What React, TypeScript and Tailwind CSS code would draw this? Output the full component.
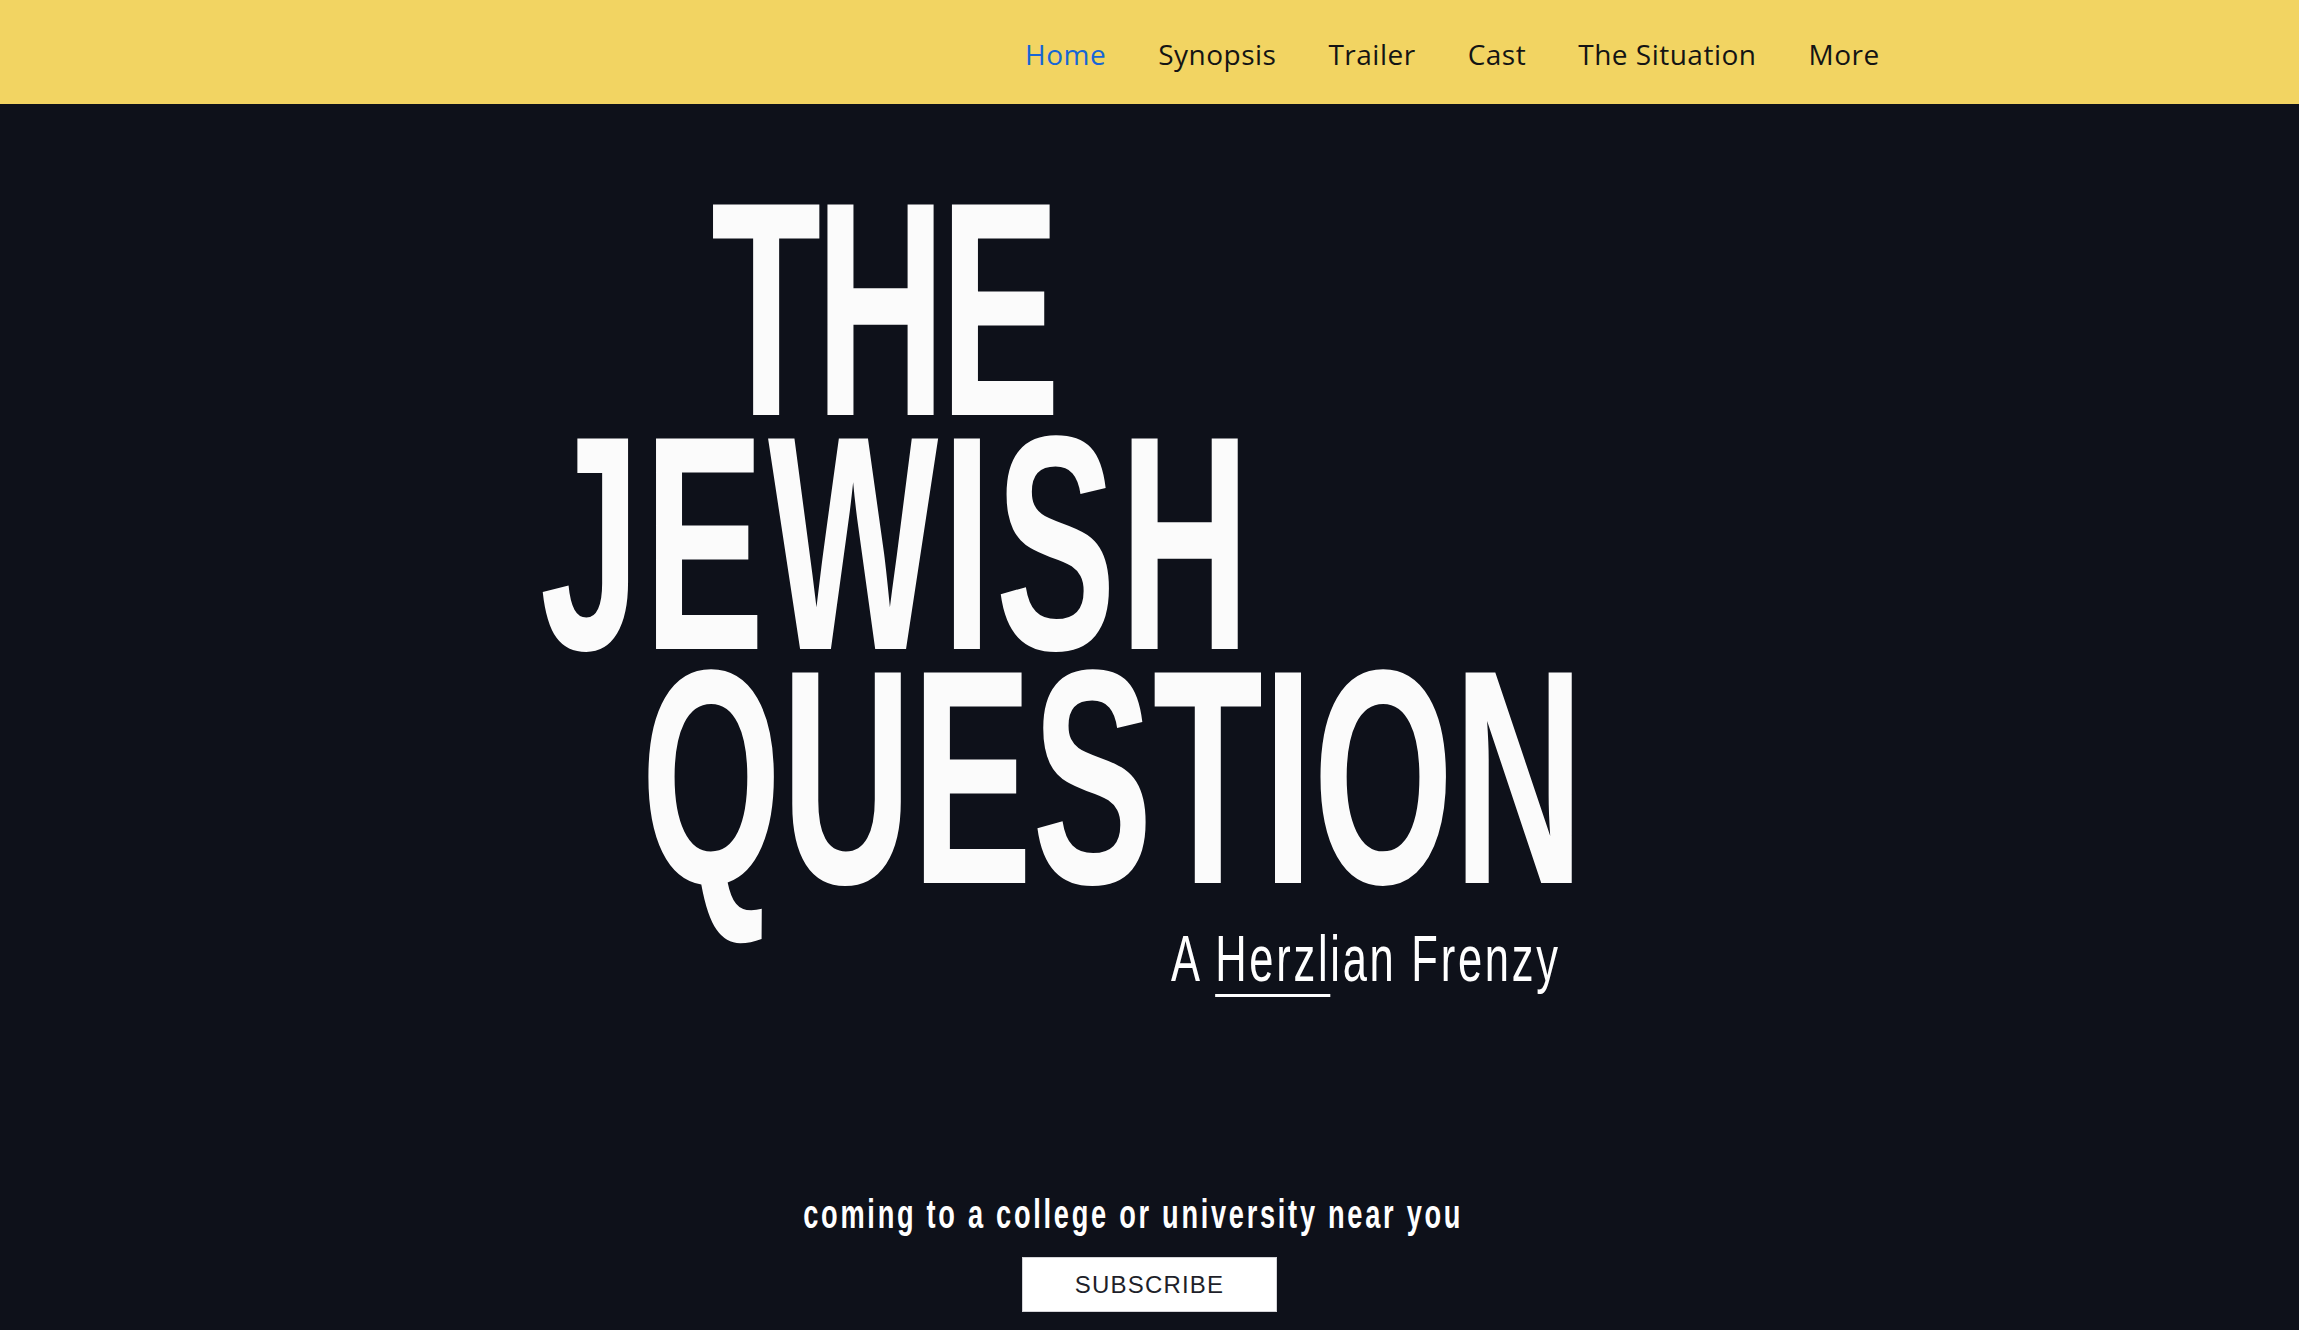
import React from "react";

const navItems = ["Home", "Synopsis", "Trailer", "Cast", "The Situation", "More"];

const Header = () => (
	<header className="h-[104px] bg-[#f2d462] flex items-center">
		<nav className="ml-[1025px] flex items-center gap-[52px] pt-[4px] font-['Open_Sans',sans-serif] text-[28px] tracking-[0.5px] leading-none">
			{navItems.map((item, i) => (
				<a
					key={item}
					href="#"
					className={i === 0 ? "text-[#1766d6]" : "text-[#141414]"}
				>
					{item}
				</a>
			))}
		</nav>
	</header>
);

const Title = () => (
	<h1 className="font-['Liberation_Sans',Arial,sans-serif] font-bold text-[306px] leading-[234px] text-[#fbfbfb] whitespace-nowrap">
		<div className="ml-[711px] origin-left scale-x-[0.59] tracking-[-10px]">THE</div>
		<div className="ml-[540px] origin-left scale-x-[0.59] tracking-[6px]">JEWISH</div>
		<div className="ml-[641px] origin-left scale-x-[0.59]">QUESTION</div>
	</h1>
);

export default function App() {
	return (
		<div className="min-h-[1330px] bg-[#0e111a] flex flex-col">
			<Header />
			<main className="flex-1 flex flex-col pt-[88px]">
				<Title />

				<p className="mt-[33px] ml-[1171px] origin-left scale-x-[0.68] whitespace-nowrap font-['Liberation_Sans',Arial,sans-serif] text-[64px] leading-[64px] tracking-[4px] text-white">
					A{" "}
					<span className="underline decoration-[3px] underline-offset-[13px]">
						Herzl
					</span>
					ian Frenzy
				</p>

				<div className="mt-[203px] flex flex-col items-center">
					<p className="mr-8 scale-x-[0.68] whitespace-nowrap font-['Liberation_Sans',Arial,sans-serif] font-bold text-[40px] leading-[40px] tracking-[4px] text-white">
						coming to a college or university near you
					</p>
					<button className="mt-[23px] w-[255px] h-[55px] bg-white border border-[#d4d4d8] font-['Liberation_Sans',Arial,sans-serif] text-[24px] tracking-[1.2px] text-[#1e1f2a] flex items-center justify-center">
						SUBSCRIBE
					</button>
				</div>
			</main>
		</div>
	);
}
